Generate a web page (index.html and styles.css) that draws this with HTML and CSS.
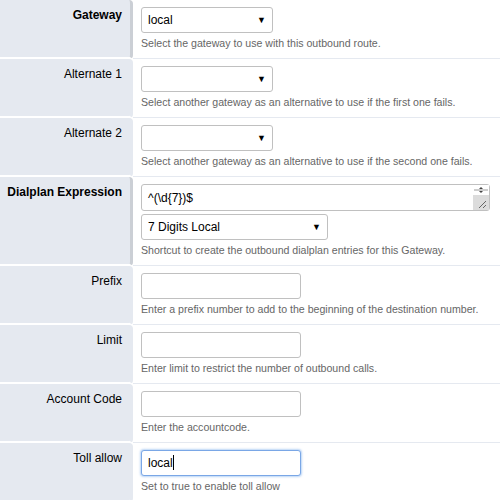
FILE: index.html
```html
<!DOCTYPE html>
<html>
<head>
<meta charset="utf-8">
<link rel="stylesheet" href="styles.css">
</head>
<body>
<table class="form">
  <tr>
    <td class="lbl req">Gateway</td>
    <td class="fld">
      <span class="sel w132"><select class="ff"><option>local</option></select></span>
      <div class="desc">Select the gateway to use with this outbound route.</div>
    </td>
  </tr>
  <tr>
    <td class="lbl">Alternate 1</td>
    <td class="fld">
      <span class="sel w132"><select class="ff"><option></option></select></span>
      <div class="desc">Select another gateway as an alternative to use if the first one fails.</div>
    </td>
  </tr>
  <tr>
    <td class="lbl">Alternate 2</td>
    <td class="fld">
      <span class="sel w132"><select class="ff"><option></option></select></span>
      <div class="desc">Select another gateway as an alternative to use if the second one fails.</div>
    </td>
  </tr>
  <tr>
    <td class="lbl req">Dialplan Expression</td>
    <td class="fld">
      <span class="ta-wrap">
        <textarea class="ff ta">^(\d{7})$</textarea>
        <span class="sb">
          <span class="sb-top">
            <svg width="16" height="10" viewBox="0 0 16 10"><line x1="1" y1="5" x2="15" y2="5" stroke="#9a9a9a" stroke-width="1"/><path d="M6 4 L10 4 L8 2 Z" fill="#444"/><path d="M6 6 L10 6 L8 8 Z" fill="#444"/></svg>
          </span>
          <span class="sb-bot">
            <svg width="16" height="16" viewBox="0 0 16 16"><line x1="6" y1="13" x2="13" y2="6" stroke="#666" stroke-width="1"/><line x1="10" y1="13" x2="13" y2="10" stroke="#666" stroke-width="1"/></svg>
          </span>
        </span>
      </span>
      <span class="sel w187 mt"><select class="ff"><option>7 Digits Local</option></select></span>
      <div class="desc">Shortcut to create the outbound dialplan entries for this Gateway.</div>
    </td>
  </tr>
  <tr>
    <td class="lbl">Prefix</td>
    <td class="fld">
      <input class="ff txt" type="text" value="">
      <div class="desc">Enter a prefix number to add to the beginning of the destination number.</div>
    </td>
  </tr>
  <tr>
    <td class="lbl">Limit</td>
    <td class="fld">
      <input class="ff txt" type="text" value="">
      <div class="desc">Enter limit to restrict the number of outbound calls.</div>
    </td>
  </tr>
  <tr>
    <td class="lbl">Account Code</td>
    <td class="fld">
      <input class="ff txt" type="text" value="">
      <div class="desc">Enter the accountcode.</div>
    </td>
  </tr>
  <tr>
    <td class="lbl">Toll allow</td>
    <td class="fld">
      <span class="ff txt focus">local<span class="caret"></span></span>
      <div class="desc">Set to true to enable toll allow</div>
    </td>
  </tr>
</table>
</body>
</html>
```

FILE: styles.css
```css
html, body {
  margin: 0;
  padding: 0;
  background: #fff;
  font-family: "Liberation Sans", Arial, sans-serif;
}
.form {
  width: 500px;
  border-collapse: separate;
  border-spacing: 0;
}
.form td {
  vertical-align: top;
}
.lbl {
  width: 122px;
  background: #e5e9f0;
  text-align: right;
  font-size: 12px;
  color: #000;
  padding: 8px 8px 0 0;
  border-right: 3px solid #e5e9f0;
  border-bottom: 2px solid #fff;
  border-radius: 0 4px 4px 0;
  white-space: nowrap;
}
.lbl.req {
  font-weight: bold;
  border-right-color: #cbcfd5;
}
.fld {
  padding: 7px 0 7px 8px;
  border-bottom: 1px solid #e5e9f0;
}
.ff {
  display: block;
  box-sizing: border-box;
  height: 26px;
  border: 1px solid #c0c0c0;
  border-radius: 3px;
  background: #fff;
  font-family: "Liberation Sans", Arial, sans-serif;
  font-size: 12px;
  color: #000;
  padding: 0 6px;
  margin: 0;
}
.sel {
  display: block;
  position: relative;
}
.sel select {
  appearance: none;
  -webkit-appearance: none;
  width: 100%;
  outline: none;
}
.sel::after {
  content: "▼";
  position: absolute;
  right: 7px;
  top: 8px;
  font-size: 9px;
  color: #000;
  pointer-events: none;
}
.w132 { width: 132px; }
.w187 { width: 187px; }
.mt { margin-top: 3px; }
.txt {
  width: 160px;
  line-height: 24px;
}
.focus {
  border-color: #7aa7e6;
  box-shadow: 0 0 2px 1px rgba(102, 160, 233, 0.45);
}
.caret {
  display: inline-block;
  width: 1px;
  height: 15px;
  background: #000;
  vertical-align: -3px;
}
.ta-wrap {
  display: block;
  position: relative;
  width: 349px;
}
.ta {
  width: 349px;
  height: 27px;
  resize: none;
  overflow: hidden;
  padding: 6px 6px;
  line-height: 14px;
}
.sb {
  position: absolute;
  right: 1px;
  top: 1px;
  width: 16px;
  height: 25px;
  display: flex;
  flex-direction: column;
}
.sb-top {
  height: 10px;
  background: #fff;
  display: block;
}
.sb-top svg, .sb-bot svg { display: block; }
.sb-bot {
  flex: 1;
  background: #dcdcdc;
  overflow: hidden;
  display: block;
}
.desc {
  font-size: 10.6px;
  color: #666;
  margin-top: 3px;
  line-height: 15px;
  white-space: nowrap;
}
```
